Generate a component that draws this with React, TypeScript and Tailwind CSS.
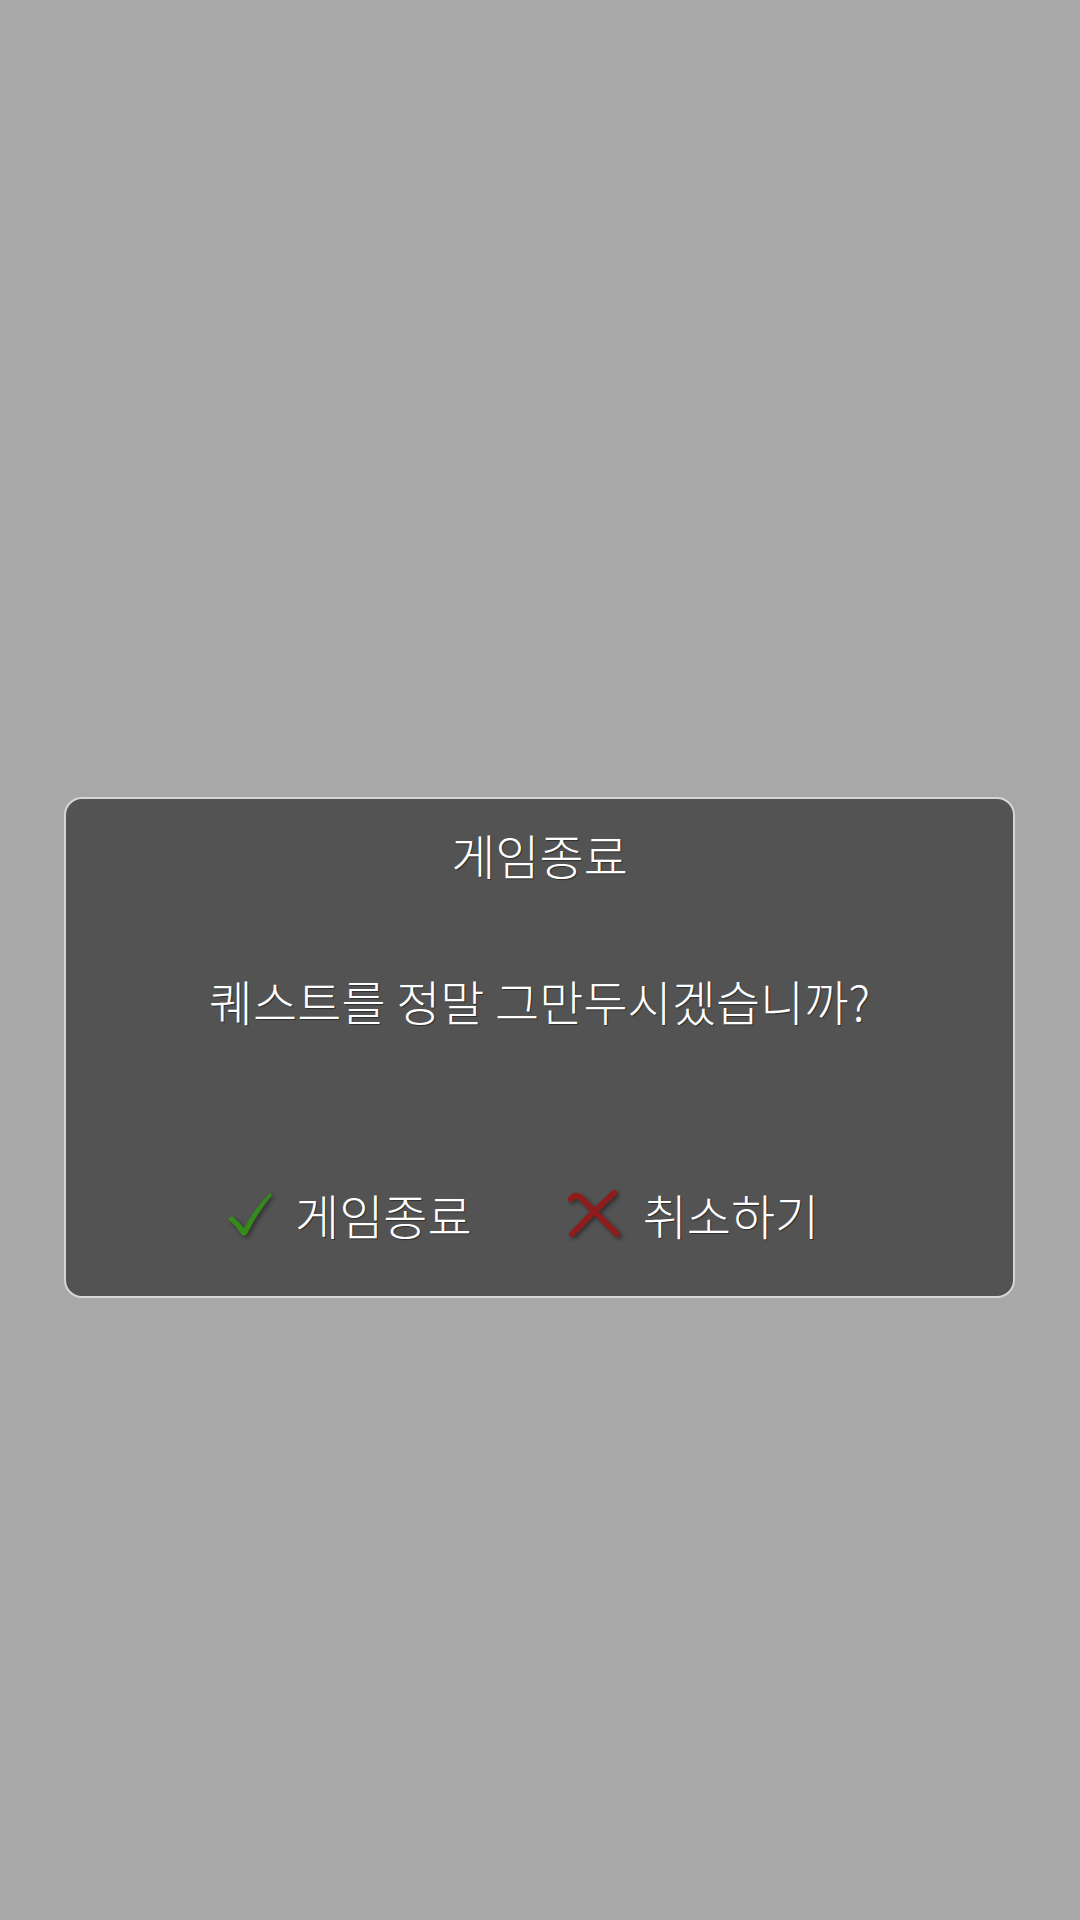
import React from "react";

const FONT = "font-['Noto_Sans_CJK_KR','Noto_Sans',sans-serif]";
const TEXT_SHADOW = "[text-shadow:1px_1px_1px_rgba(0,0,0,0.45)]";

function CheckIcon() {
  return (
    <svg
      width="46"
      height="46"
      viewBox="0 0 46 46"
      className="drop-shadow-[2px_2px_2px_rgba(0,0,0,0.45)]"
    >
      <path
        d="M1 28 L5 25 Q11 30 17 37 Q27 18 43 2 L45 4 Q31 21 20 43 Q18 46 15 44 Q9 35 1 28 Z"
        fill="#358a1c"
      />
    </svg>
  );
}

function CrossIcon() {
  return (
    <svg
      width="56"
      height="48"
      viewBox="0 0 56 48"
      className="drop-shadow-[2px_2px_2px_rgba(0,0,0,0.45)]"
    >
      <path
        d="M4 9 Q8 3 14 8 Q32 26 50 44"
        fill="none"
        stroke="#8e1c1c"
        strokeWidth="6"
        strokeLinecap="round"
      />
      <path
        d="M47 3 Q26 22 5 44"
        fill="none"
        stroke="#8e1c1c"
        strokeWidth="6"
        strokeLinecap="round"
      />
    </svg>
  );
}

export default function App() {
  return (
    <div className={`min-h-[1920px] w-[1080px] bg-[#a8a8a8] pt-[797px] ${FONT}`}>
      <div className="ml-[64px] flex h-[501px] w-[951px] flex-col rounded-[18px] border-2 border-[#d6d6d6] bg-[#535353] pt-[25px] text-white">
        <div
          className={`flex h-[60px] items-center justify-center text-[48px] font-light leading-none ${TEXT_SHADOW}`}
        >
          게임종료
        </div>

        <div
          className={`mt-[86px] flex h-[60px] items-center justify-center text-[48px] font-light leading-none ${TEXT_SHADOW}`}
        >
          퀘스트를 정말 그만두시겠습니까?
        </div>

        <div className="mt-[154px] flex h-[60px] items-center pl-[161px]">
          <button className="flex items-center gap-[22px]">
            <CheckIcon />
            <span className={`text-[48px] font-light leading-none ${TEXT_SHADOW}`}>
              게임종료
            </span>
          </button>
          <button className="ml-[95px] flex items-center gap-[20px]">
            <CrossIcon />
            <span className={`text-[48px] font-light leading-none ${TEXT_SHADOW}`}>
              취소하기
            </span>
          </button>
        </div>
      </div>
    </div>
  );
}
